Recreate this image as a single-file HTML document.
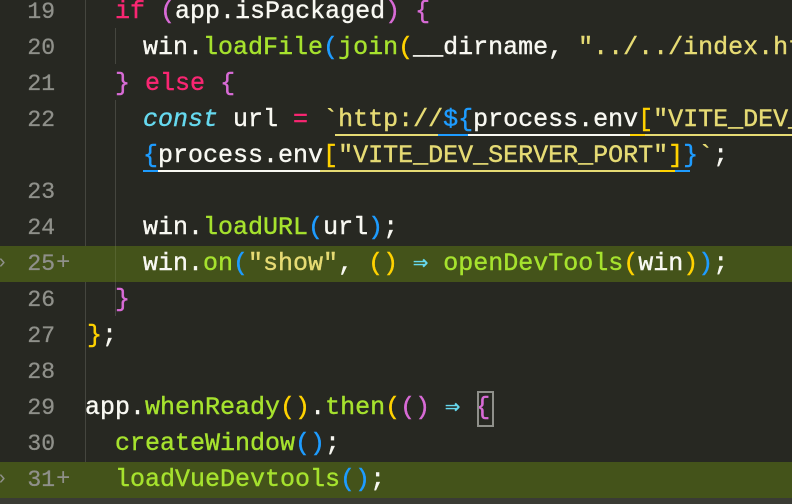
<!DOCTYPE html>
<html><head><meta charset="utf-8"><style>
html,body{margin:0;width:792px;height:504px;overflow:hidden;}
body{background:#272822;font-family:"Liberation Mono","DejaVu Sans Mono",monospace;position:relative;}
.r{position:absolute;left:0;width:792px;height:36px;line-height:36px;overflow:hidden;}
.hl{background:#44531a;}
.n{position:absolute;right:737px;color:#8f908a;font-size:23px;-webkit-text-stroke:0.3px #8f908a;}
.p{position:absolute;left:56px;color:#8f908a;font-size:24px;}
.m{position:absolute;left:-4px;color:#8f908a;font-size:20px;}
.c{position:absolute;font-size:25px;color:#f8f8f2;white-space:pre;-webkit-text-stroke:0.4px currentColor;}
.c span{-webkit-text-stroke:0.4px currentColor;}
.g{position:absolute;width:1px;background:#45463f;}
.k{color:#f92672}.f{color:#a6e22e}.s{color:#e6db74}.pu{color:#d86bd6}.b{color:#1e9cff}.y{color:#ffd200}.cy{color:#66d9ef}
.i{font-style:italic;color:#66d9ef}
.u{position:absolute;height:2px;}
</style></head><body>
<div class="g" style="left:85px;top:0;height:460px"></div>
<div class="g" style="left:115px;top:28px;height:36px"></div>
<div class="g" style="left:115px;top:100px;height:216px"></div>
<div class="g" style="left:85px;top:424px;height:80px"></div>

<div class="r" style="top:-6px"><span class="n">19</span><span class="c" style="left:115px"><span class="k">if</span> <span class="pu">(</span>app.isPackaged<span class="pu">)</span> <span class="pu">{</span></span></div>
<div class="r" style="top:30px"><span class="n">20</span><span class="c" style="left:143px">win.<span class="f">loadFile</span><span class="b">(</span><span class="f">join</span><span class="y">(</span>__dirname, <span class="s">"../../index.html"</span></span></div>
<div class="r" style="top:66px"><span class="n">21</span><span class="c" style="left:115px"><span class="pu">}</span> <span class="k">else</span> <span class="pu">{</span></span></div>
<div class="r" style="top:102px"><span class="n">22</span><span class="c" style="left:143px"><span class="i">const</span> url <span class="k">=</span> <span class="s">`http://</span><span class="b">${</span>process.env<span class="y">[</span><span class="s">"VITE_DEV_SERVER_HOST"</span></span></div>
<div class="r" style="top:138px"><span class="c" style="left:143px"><span class="b">{</span>process.env<span class="y">[</span><span class="s">"VITE_DEV_SERVER_PORT"</span><span class="y">]</span><span class="b">}</span><span class="s">`</span>;</span></div>
<div class="u" style="left:335px;top:134px;width:457px;background:#e6db74"></div>
<div class="u" style="left:438px;top:134px;width:30px;background:#1e9cff"></div>
<div class="u" style="left:468px;top:134px;width:162px;background:#f8f8f2"></div>
<div class="u" style="left:630px;top:134px;width:15px;background:#ffd200"></div>
<div class="u" style="left:143px;top:170px;width:547px;background:#e6db74"></div>
<div class="u" style="left:143px;top:170px;width:15px;background:#1e9cff"></div>
<div class="u" style="left:158px;top:170px;width:162px;background:#f8f8f2"></div>
<div class="u" style="left:660px;top:170px;width:15px;background:#ffd200"></div>
<div class="u" style="left:675px;top:170px;width:15px;background:#1e9cff"></div>
<div class="r" style="top:174px"><span class="n">23</span></div>
<div class="r" style="top:210px"><span class="n">24</span><span class="c" style="left:143px">win.<span class="f">loadURL</span><span class="b">(</span>url<span class="b">)</span>;</span></div>
<div class="r hl" style="top:246px"><span class="m">›</span><span class="n">25</span><span class="p">+</span><span class="c" style="left:143px">win.<span class="f">on</span><span class="b">(</span><span class="s">"show"</span>, <span class="y">()</span> <span class="cy">⇒</span> <span class="f">openDevTools</span><span class="y">(</span>win<span class="y">)</span><span class="b">)</span>;</span></div>
<div class="g" style="left:115px;top:246px;height:36px;background:#55632e"></div>
<div class="r" style="top:282px"><span class="n">26</span><span class="c" style="left:115px"><span class="pu">}</span></span></div>
<div class="r" style="top:318px"><span class="n">27</span><span class="c" style="left:87px"><span class="y">}</span>;</span></div>
<div class="r" style="top:354px"><span class="n">28</span></div>
<div class="r" style="top:390px"><span class="n">29</span><span class="c" style="left:85px">app.<span class="f">whenReady</span><span class="y">()</span>.<span class="f">then</span><span class="y">(</span><span class="pu">()</span> <span class="cy">⇒</span> <span class="pu">{</span></span></div>
<div style="position:absolute;left:477px;top:391px;width:13px;height:32px;border:2px solid #8f908a"></div>
<div class="r" style="top:426px"><span class="n">30</span><span class="c" style="left:115px"><span class="f">createWindow</span><span class="b">()</span>;</span></div>
<div class="r hl" style="top:462px"><span class="m">›</span><span class="n">31</span><span class="p">+</span><span class="c" style="left:115px"><span class="f">loadVueDevtools</span><span class="b">()</span>;</span></div>
<div style="position:absolute;left:0;top:498px;width:792px;height:6px;background:#3a3b34"></div>
</body></html>
